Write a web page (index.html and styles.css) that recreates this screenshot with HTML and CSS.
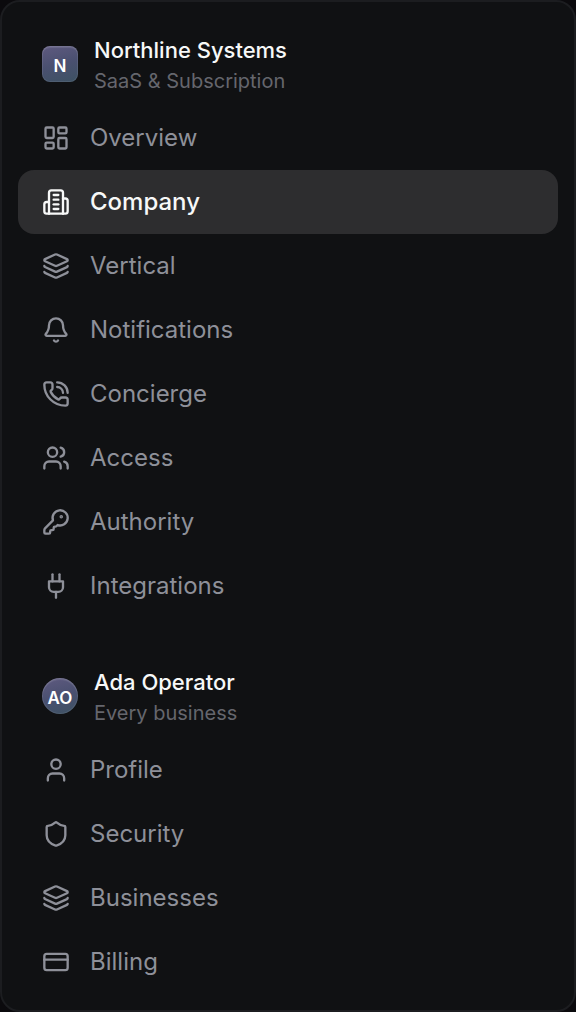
FILE: index.html
```html
<!DOCTYPE html>
<html lang="en">
<head>
<meta charset="utf-8">
<meta name="viewport" content="width=device-width, initial-scale=1">
<title>Northline Systems</title>
<link rel="stylesheet" href="styles.css">
</head>
<body>
<aside class="sidebar">
  <section class="group">
    <header class="identity">
      <span class="avatar" aria-hidden="true">N</span>
      <div class="identity-text">
        <h2 class="identity-name">Northline Systems</h2>
        <p class="identity-note">SaaS &amp; Subscription</p>
      </div>
    </header>
    <nav class="menu" aria-label="Business">
      <a class="item" href="#overview"><svg class="icon" viewBox="0 0 24 24"><rect width="7" height="9" x="3" y="3" rx="1"/><rect width="7" height="5" x="14" y="3" rx="1"/><rect width="7" height="9" x="14" y="12" rx="1"/><rect width="7" height="5" x="3" y="16" rx="1"/></svg>Overview</a>
      <a class="item item-active" href="#company" aria-current="page"><svg class="icon" viewBox="0 0 24 24"><path d="M6 22V4a2 2 0 0 1 2-2h8a2 2 0 0 1 2 2v18Z"/><path d="M6 12H4a2 2 0 0 0-2 2v6a2 2 0 0 0 2 2h2"/><path d="M18 9h2a2 2 0 0 1 2 2v9a2 2 0 0 1-2 2h-2"/><path d="M10 6h4"/><path d="M10 10h4"/><path d="M10 14h4"/><path d="M10 18h4"/></svg>Company</a>
      <a class="item" href="#vertical"><svg class="icon" viewBox="0 0 24 24"><path d="M12.83 2.18a2 2 0 0 0-1.66 0L2.6 6.08a1 1 0 0 0 0 1.83l8.58 3.91a2 2 0 0 0 1.66 0l8.58-3.9a1 1 0 0 0 0-1.83z"/><path d="M2 12a1 1 0 0 0 .58.91l8.6 3.91a2 2 0 0 0 1.65 0l8.58-3.9A1 1 0 0 0 22 12"/><path d="M2 17a1 1 0 0 0 .58.91l8.6 3.91a2 2 0 0 0 1.65 0l8.58-3.9A1 1 0 0 0 22 17"/></svg>Vertical</a>
      <a class="item" href="#notifications"><svg class="icon" viewBox="0 0 24 24"><path d="M10.268 21a2 2 0 0 0 3.464 0"/><path d="M3.262 15.326A1 1 0 0 0 4 17h16a1 1 0 0 0 .74-1.673C19.41 13.956 18 12.499 18 8A6 6 0 0 0 6 8c0 4.499-1.411 5.956-2.738 7.326"/></svg>Notifications</a>
      <a class="item" href="#concierge"><svg class="icon" viewBox="0 0 24 24"><path d="M13 2a9 9 0 0 1 9 9"/><path d="M13 6a5 5 0 0 1 5 5"/><path d="M13.832 16.568a1 1 0 0 0 1.213-.303l.355-.465A2 2 0 0 1 17 15h3a2 2 0 0 1 2 2v3a2 2 0 0 1-2 2A18 18 0 0 1 2 4a2 2 0 0 1 2-2h3a2 2 0 0 1 2 2v3a2 2 0 0 1-.8 1.6l-.468.351a1 1 0 0 0-.292 1.233 14 14 0 0 0 6.392 6.384"/></svg>Concierge</a>
      <a class="item" href="#access"><svg class="icon" viewBox="0 0 24 24"><path d="M16 21v-2a4 4 0 0 0-4-4H6a4 4 0 0 0-4 4v2"/><path d="M16 3.128a4 4 0 0 1 0 7.744"/><path d="M22 21v-2a4 4 0 0 0-3-3.87"/><circle cx="9" cy="7" r="4"/></svg>Access</a>
      <a class="item" href="#authority"><svg class="icon" viewBox="0 0 24 24"><path d="M2.586 17.414A2 2 0 0 0 2 18.828V21a1 1 0 0 0 1 1h3a1 1 0 0 0 1-1v-1a1 1 0 0 1 1-1h1a1 1 0 0 0 1-1v-1a1 1 0 0 1 1-1h.172a2 2 0 0 0 1.414-.586l.814-.814a6.5 6.5 0 1 0-4-4z"/><circle class="icon-dot" cx="16.5" cy="7.5" r=".5"/></svg>Authority</a>
      <a class="item" href="#integrations"><svg class="icon" viewBox="0 0 24 24"><path d="M12 22v-5"/><path d="M9 8V2"/><path d="M15 8V2"/><path d="M18 8v5a4 4 0 0 1-4 4h-4a4 4 0 0 1-4-4V8Z"/></svg>Integrations</a>
    </nav>
  </section>
  <section class="group">
    <header class="identity">
      <span class="avatar avatar-round" aria-hidden="true">AO</span>
      <div class="identity-text">
        <h2 class="identity-name">Ada Operator</h2>
        <p class="identity-note">Every business</p>
      </div>
    </header>
    <nav class="menu" aria-label="Account">
      <a class="item" href="#profile"><svg class="icon" viewBox="0 0 24 24"><path d="M19 21v-2a4 4 0 0 0-4-4H9a4 4 0 0 0-4 4v2"/><circle cx="12" cy="7" r="4"/></svg>Profile</a>
      <a class="item" href="#security"><svg class="icon" viewBox="0 0 24 24"><path d="M20 13c0 5-3.5 7.5-7.66 8.95a1 1 0 0 1-.67-.01C7.5 20.5 4 18 4 13V6a1 1 0 0 1 1-1c2 0 4.5-1.2 6.24-2.72a1.17 1.17 0 0 1 1.52 0C14.51 3.81 17 5 19 5a1 1 0 0 1 1 1z"/></svg>Security</a>
      <a class="item" href="#businesses"><svg class="icon" viewBox="0 0 24 24"><path d="M12.83 2.18a2 2 0 0 0-1.66 0L2.6 6.08a1 1 0 0 0 0 1.83l8.58 3.91a2 2 0 0 0 1.66 0l8.58-3.9a1 1 0 0 0 0-1.83z"/><path d="M2 12a1 1 0 0 0 .58.91l8.6 3.91a2 2 0 0 0 1.65 0l8.58-3.9A1 1 0 0 0 22 12"/><path d="M2 17a1 1 0 0 0 .58.91l8.6 3.91a2 2 0 0 0 1.65 0l8.58-3.9A1 1 0 0 0 22 17"/></svg>Businesses</a>
      <a class="item" href="#billing"><svg class="icon" viewBox="0 0 24 24"><rect width="20" height="14" x="2" y="5" rx="2"/><path d="M2 10h20"/></svg>Billing</a>
    </nav>
  </section>
</aside>
</body>
</html>
```
FILE: styles.css
```css
* {
  box-sizing: border-box;
}

body {
  margin: 0;
  background: #0b0a0d;
  font-family: Inter, "Liberation Sans", sans-serif;
}

.sidebar {
  display: flex;
  flex-direction: column;
  gap: 32px;
  padding: 16px;
  border: 2px solid #1c1d20;
  border-radius: 20px;
  background: #101113;
}

.identity {
  display: flex;
  align-items: flex-start;
  gap: 16px;
  padding: 16px 24px 10px;
}

.identity-name,
.identity-note {
  margin: 0;
}

.identity-name {
  color: #f7f8f8;
  font-size: 22px;
  font-weight: 500;
  line-height: 32px;
}

.identity-note {
  color: #65666d;
  font-size: 20px;
  line-height: 30px;
}

.avatar {
  display: flex;
  flex: none;
  align-items: center;
  justify-content: center;
  width: 36px;
  height: 36px;
  margin-top: 12px;
  padding-top: 4px;
  border-radius: 8px;
  background: linear-gradient(165deg, #5f5a80 0%, #4a5070 50%, #3d5263 100%);
  box-shadow: inset 0 0 0 1px #ffffff14, inset 0 2px 1px #ffffff1a;
  color: #fff;
  font-size: 17px;
  font-weight: 600;
  line-height: 20px;
}

.avatar-round {
  border-radius: 50%;
}

.menu {
  display: flex;
  flex-direction: column;
}

.item {
  display: flex;
  align-items: center;
  gap: 20px;
  padding: 16px 24px;
  border-radius: 16px;
  color: #8e9099;
  font-size: 24px;
  line-height: 32px;
  text-decoration: none;
}

.item-active {
  background: #2d2d2f;
  color: #f7f8f8;
  font-weight: 500;
}

.icon {
  flex: none;
  width: 28px;
  height: 28px;
  fill: none;
  stroke: currentColor;
  stroke-width: 2;
  stroke-linecap: round;
  stroke-linejoin: round;
}

.icon-dot {
  fill: currentColor;
}
```
